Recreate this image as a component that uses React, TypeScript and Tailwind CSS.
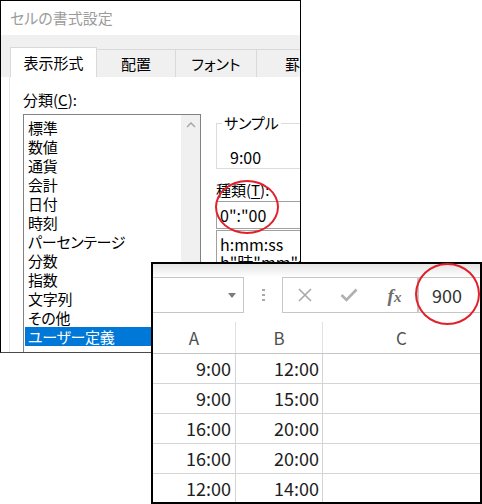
import React from "react";

const categories = [
  "標準",
  "数値",
  "通貨",
  "会計",
  "日付",
  "時刻",
  "パーセンテージ",
  "分数",
  "指数",
  "文字列",
  "その他",
  "ユーザー定義",
];

const rows: [string, string][] = [
  ["9:00", "12:00"],
  ["9:00", "15:00"],
  ["16:00", "20:00"],
  ["16:00", "20:00"],
  ["12:00", "14:00"],
];

function Dialog() {
  return (
    <div className="w-[301px] h-[353px] border border-black border-b-[#4a4a4a] flex flex-col overflow-hidden bg-white">
      {/* title bar */}
      <div className="h-[34px] shrink-0 flex items-center pl-[9px] text-[15px] leading-[20px] text-[#9c9c9c]">
        セルの書式設定
      </div>
      {/* tab strip */}
      <div className="h-[42px] shrink-0 bg-[#f0f0f0] flex items-end pl-[9px] text-[15px] leading-[20px] text-black overflow-hidden">
        <div className="w-[87px] shrink-0 h-[30px] bg-white border border-b-0 border-[#d9d9d9] flex items-center justify-center">
          表示形式
        </div>
        <div className="w-[79px] shrink-0 h-[28px] border-t border-r border-[#d9d9d9] flex items-center justify-center">
          配置
        </div>
        <div className="w-[81px] shrink-0 h-[28px] border-t border-r border-[#d9d9d9] flex items-center justify-center">
          フォント
        </div>
        <div className="w-[70px] shrink-0 h-[28px] border-t border-[#d9d9d9] flex items-center pl-[28px] whitespace-nowrap">
          罫線
        </div>
      </div>
      {/* content */}
      <div className="flex-1 flex min-h-0 bg-white border-l border-[#e6e6e6] ml-[8px]">
        {/* left column */}
        <div className="flex flex-col pl-[13px] pt-[13px] min-h-0 shrink-0">
          <div className="text-[15px] leading-[20px] text-black">
            分類(<span className="underline underline-offset-2">C</span>):
          </div>
          <div className="mt-[4px] w-[178px] flex-1 border border-b-0 border-[#828282] flex min-h-0">
            <div className="flex-1 pt-[3px] flex flex-col min-w-0">
              {categories.map((c, i) => (
                <div
                  key={c}
                  className={
                    i === categories.length - 1
                      ? "h-[19px] leading-[19px] pl-[3px] mx-[1px] text-[15px] tracking-[-0.3px] bg-[#0078d7] text-white whitespace-nowrap"
                      : "h-[19px] leading-[19px] pl-[3px] mx-[1px] text-[15px] tracking-[-0.3px] text-black whitespace-nowrap"
                  }
                >
                  {c}
                </div>
              ))}
            </div>
            <div className="w-[19px] bg-[#f0f0f0] flex justify-center pt-[6px]">
              <svg width="10" height="7" viewBox="0 0 10 7">
                <path d="M1 6 L5 2 L9 6" fill="none" stroke="#a3a3a3" strokeWidth="1.4" />
              </svg>
            </div>
          </div>
        </div>
        {/* right column */}
        <div className="ml-[15px] w-[130px] shrink-0 flex flex-col">
          <fieldset className="mt-[36px] w-[130px] border border-[#dcdcdc] pl-[13px] pt-[14px] pb-[1px]">
            <legend className="ml-[-8px] px-[2px] text-[15px] leading-[20px] text-black">
              サンプル
            </legend>
            <div className="text-[16px] leading-[20px] text-black">9:00</div>
          </fieldset>
          <div className="mt-[11px] text-[15px] leading-[20px] text-black whitespace-nowrap">
            種類(<span className="underline underline-offset-2">T</span>):
          </div>
          <div className="mt-[1px] w-[130px] h-[28px] border border-[#a0a0a0] flex items-center pl-[3px] text-[16px] text-black whitespace-nowrap">
            0":"00
          </div>
          <div className="mt-[1px] w-[130px] h-[60px] border border-[#a0a0a0] pl-[3px] pt-[4px] text-[16px] leading-[18px] text-black whitespace-nowrap">
            <div>h:mm:ss</div>
            <div>h"時"mm"分"</div>
          </div>
        </div>
      </div>
    </div>
  );
}

function ExcelPanel() {
  return (
    <div className="absolute left-[151px] top-[262px] w-[331px] h-[242px] border-2 border-black bg-white overflow-hidden flex flex-col">
      <div className="h-[13px] shrink-0 bg-gradient-to-b from-[#e4e4e4] to-white" />
      {/* formula bar */}
      <div className="h-[36px] shrink-0 flex">
        <div className="ml-[-3px] w-[94px] shrink-0 border border-[#c6c6c6] flex items-center justify-end pr-[7px]">
          <svg width="8" height="5" viewBox="0 0 8 5">
            <path d="M0 0 L8 0 L4 5 Z" fill="#7b7b7b" />
          </svg>
        </div>
        <div className="w-[38px] shrink-0 flex flex-col items-center justify-center gap-[3px]">
          <div className="w-[3px] h-[2px] bg-[#a8a8a8]" />
          <div className="w-[3px] h-[2px] bg-[#a8a8a8]" />
          <div className="w-[3px] h-[2px] bg-[#a8a8a8]" />
        </div>
        <div className="w-[136px] shrink-0 border border-[#c6c6c6] flex items-center">
          <div className="w-[43px] flex justify-center">
            <svg width="14" height="14" viewBox="0 0 14 14">
              <path d="M1 1 L13 13 M13 1 L1 13" stroke="#a8a8a8" strokeWidth="1.6" fill="none" />
            </svg>
          </div>
          <div className="w-[46px] flex justify-center">
            <svg width="18" height="14" viewBox="0 0 18 14">
              <path d="M1.5 7 L6.5 12 L16.5 1.5" stroke="#b0b0b0" strokeWidth="2.6" fill="none" />
            </svg>
          </div>
          <div className="w-[45px] flex justify-center font-['Liberation_Serif',serif] italic font-bold text-[19px] leading-none text-[#6e6e6e]">
            <span>f</span>
            <span className="text-[15px] mt-[4px]">x</span>
          </div>
        </div>
        <div className="flex-1 border border-r-0 border-[#c6c6c6] flex items-center pl-[13px] text-[18px] text-[#333]">
          900
        </div>
      </div>
      <div className="h-[9px] shrink-0" />
      {/* column header */}
      <div className="h-[32px] shrink-0 flex border-b border-[#c6c6c6] text-[17px] text-[#505050]">
        <div className="w-[83px] border-r border-[#e2e2e2] flex items-center justify-center">A</div>
        <div className="w-[87px] border-r border-[#e2e2e2] flex items-center justify-center">B</div>
        <div className="flex-1 flex items-center justify-center">C</div>
      </div>
      {/* rows */}
      {rows.map((r, i) => (
        <div key={i} className="h-[30px] shrink-0 flex border-b border-[#d4d4d4] text-[18px] text-[#1e1e1e]">
          <div className="w-[83px] border-r border-[#d4d4d4] flex items-center justify-end pr-[4px]">{r[0]}</div>
          <div className="w-[87px] border-r border-[#d4d4d4] flex items-center justify-end pr-[3px]">{r[1]}</div>
          <div className="flex-1" />
        </div>
      ))}
    </div>
  );
}

export default function App() {
  return (
    <div className="relative w-[482px] h-[504px] bg-white overflow-hidden font-['Noto_Sans_CJK_JP','Noto_Sans',sans-serif] [font-feature-settings:'palt']">
      <Dialog />
      <ExcelPanel />
      <div className="absolute left-[215px] top-[180px] w-[64px] h-[54px] rounded-[50%] border-2 border-[#e3202a]" />
      <div className="absolute left-[415px] top-[263px] w-[65px] h-[62px] rounded-[50%] border-2 border-[#e3202a]" />
    </div>
  );
}
